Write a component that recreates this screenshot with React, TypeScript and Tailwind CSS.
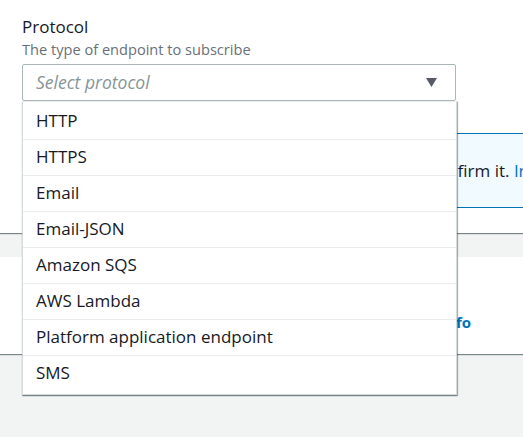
import React from 'react';

const protocols = [
  'HTTP',
  'HTTPS',
  'Email',
  'Email-JSON',
  'Amazon SQS',
  'AWS Lambda',
  'Platform application endpoint',
  'SMS',
];

export default function App() {
  return (
    <div className="relative w-[523px] h-[437px] overflow-hidden bg-[#f2f3f3] font-['Open_Sans',sans-serif] text-[#16191f]">
      {/* details card */}
      <div className="h-[233px] bg-white shadow-[0_1px_1px_0_rgba(0,28,36,0.5)] pt-[16px]">
        <div className="pl-[22px] text-[17px] leading-[22px]">Protocol</div>
        <div className="pl-[22px] mt-[1px] text-[14.6px] leading-[20px] text-[#687078]">The type of endpoint to subscribe</div>
        <div className="ml-[22px] mt-[5px] w-[434px] h-[37px] border border-[#aab7b8] rounded-[2px] flex items-center justify-between pl-[13px] pr-[18px]">
          <span className="italic text-[17.5px] text-[#879596]">Select protocol</span>
          <svg width="11" height="9" viewBox="0 0 11 9">
            <path d="M0 0 L11 0 L5.5 9 Z" fill="#545b64" />
          </svg>
        </div>
        <div className="ml-[22px] mt-[32px] w-[560px] h-[75px] bg-[#f1faff] border-y border-[#0073bb] flex items-center justify-end pr-[37px] text-[17px]">
          <span>After your subscription is created, you must confirm it.&nbsp;</span>
          <a className="text-[#0073bb]">Info</a>
        </div>
      </div>

      {/* filter policy card */}
      <div className="mt-[24px] h-[97px] bg-white shadow-[0_1px_1px_0_rgba(0,28,36,0.5)] flex items-end pb-[21px]">
        <div className="w-[471px] text-right text-[16px] leading-[22px] font-bold">
          <span>Subscription filter policy - optional </span>
          <a className="text-[#0073bb] text-[15px]">Info</a>
        </div>
      </div>

      {/* open dropdown */}
      <ul className="absolute left-[22px] top-[101px] w-[435px] bg-white border border-[#d5dbdb] border-t-[#eaeded] pt-[2px] pb-[2px] shadow-[1px_1px_1px_0_rgba(0,28,36,0.3),0_1px_1px_0_rgba(0,28,36,0.3)]">
        {protocols.map((p, i) => (
          <li
            key={p}
            className={`h-[36px] flex items-center px-[13px] pb-[2px] text-[17px] ${
              i < protocols.length - 1 ? 'border-b border-[#eaeded]' : ''
            }`}
          >
            {p}
          </li>
        ))}
      </ul>
    </div>
  );
}
